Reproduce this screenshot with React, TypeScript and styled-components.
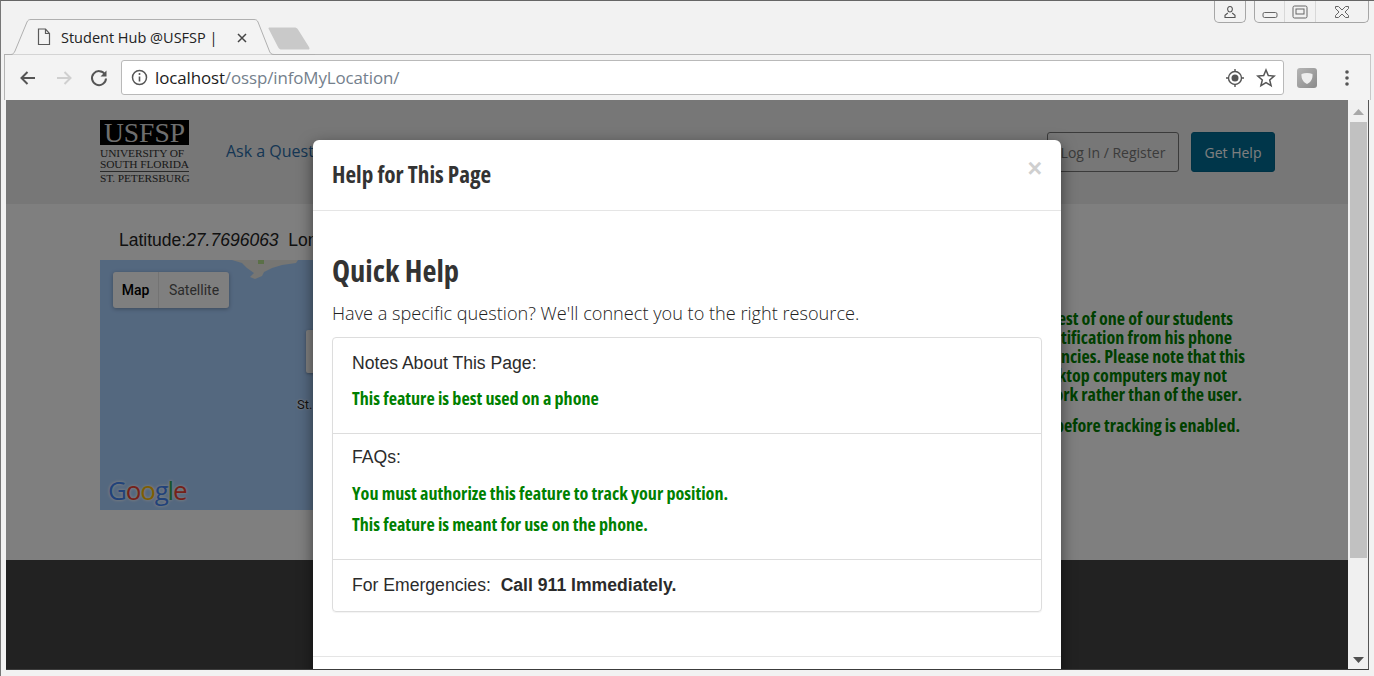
import React from "react";
import styled, { createGlobalStyle } from "styled-components";

const Global = createGlobalStyle`
  html, body { margin: 0; padding: 0; width: 1374px; height: 676px; overflow: hidden; background: #f2f2f2; }
  * { box-sizing: border-box; }
`;

const cond = `"Open Sans", "Liberation Sans Narrow", sans-serif`;

const Frame = styled.div`
  width: 1374px; height: 676px; display: flex; flex-direction: column;
  background: #f2f2f2; border-top: 1px solid #666; border-left: 1px solid #777;
  font-family: "Open Sans", sans-serif; position: relative;
`;
const TabStrip = styled.div`
  height: 53px; flex: none; display: flex; align-items: flex-start; padding-left: 36px; position: relative;
`;
const TabShape = styled.svg`
  position: absolute; left: 3px; top: 17px; width: 311px; height: 38px;
`;
const TabIcon = styled.svg`
  width: 14px; height: 18px; margin-top: 27px; position: relative; flex: none;
`;
const TabTitle = styled.div`
  font-size: 14.5px; color: #222; margin: 27px 0 0 10px; width: 176px; white-space: nowrap; position: relative; line-height: 20px;
`;
const TabClose = styled.svg`
  width: 10px; height: 10px; margin: 32px 0 0 0; position: relative; flex: none;
`;
const WindowControls = styled.div`
  position: absolute; right: 5px; top: 0; display: flex; gap: 8px;
`;
const WinGroup = styled.div`
  height: 22px; display: flex; border: 1px solid #a6a6a6; border-top: none; border-radius: 0 0 5px 5px; background: #f2f2f2;
`;
const WinButton = styled.div<{ $w: number; $divide?: boolean }>`
  width: ${(p) => p.$w}px; display: flex; align-items: center; justify-content: center;
  border-right: ${(p) => (p.$divide ? "1px solid #d8d8d8" : "none")};
`;
const Toolbar = styled.div`
  height: 46px; flex: none; margin: 0 3px 0 3px; display: flex; align-items: center; border: 1px solid #b4b4b4; border-bottom: none; border-right-color: #c8c8c8;
  background: #f3f3f3; padding: 0 0 0 13px;
`;
const NavIcon = styled.svg<{ $mr: number }>`
  width: 20px; height: 20px; margin-right: ${(p) => p.$mr}px; flex: none;
`;
const Omnibox = styled.div`
  width: 1163px; height: 35px; flex: none; background: #fff; border: 1px solid #b9b9b9; border-radius: 3px;
  display: flex; align-items: center; padding: 0 7px 0 9px;
`;
const Url = styled.div`
  font-size: 16.9px; color: #74808c; margin-left: 7px; flex: 1; white-space: nowrap; letter-spacing: -0.1px;
`;
const UrlHost = styled.span` color: #1c1c1c; `;
const ExtBadge = styled.div`
  width: 20px; height: 20px; margin-left: 13px; border-radius: 3px; background: linear-gradient(135deg, #b5b5b5, #8a8a8a);
  display: flex; align-items: center; justify-content: center; flex: none;
`;
const MenuDots = styled.svg`
  width: 6px; height: 20px; margin-left: 27px; flex: none;
`;
const Viewport = styled.div`
  flex: none; height: 570px; margin: 0 5px 0 5px; display: flex; position: relative; overflow: hidden;
  border-bottom: 1px solid #3c3c3c; border-right: 1px solid #555;
`;
const Page = styled.div`
  width: 1342px; flex: none; display: flex; flex-direction: column; background: #fff; position: relative;
`;
const Scrollbar = styled.div`
  flex: 1; background: #f0f0f0; display: flex; flex-direction: column; align-items: stretch; padding: 0 1px 0 2px;
`;
const ScrollArrow = styled.svg`
  width: 11px; height: 6px; margin: 9px auto 7px;
  flex: none;
`;
const ScrollThumb = styled.div`
  height: 436px; background: #c1c1c1; flex: none;
`;
const ScrollEnd = styled.div`
  flex: 1; display: flex; align-items: flex-end; justify-content: center; padding-bottom: 6px;
`;
const SiteHeader = styled.div`
  height: 104px; flex: none; background: #eeeeee; padding: 20px 73px 0 94px; display: flex; align-items: flex-start;
`;
const Logo = styled.div`
  width: 89px; flex: none; display: flex; flex-direction: column; font-family: "Liberation Serif", serif; color: #333; line-height: 11px; font-size: 11.4px; white-space: nowrap;
`;
const LogoBox = styled.div`
  background: #000; color: #ddd; height: 25px; font-size: 27.5px; line-height: 25px; text-align: center; margin-bottom: 3px; letter-spacing: 0; overflow: hidden;
`;
const LogoLine = styled.div<{ $rule?: boolean }>`
  letter-spacing: -0.1px;
  ${(p) => (p.$rule ? "border-top: 1px solid #555; margin-top: 1px; padding-top: 1px;" : "")}
`;
const NavLink = styled.a`
  margin: 20px 0 0 37px; font-size: 16px; color: #2a6ca8; white-space: nowrap; line-height: 22px;
`;
const Spacer = styled.div` flex: 1; `;
const OutlineButton = styled.div`
  width: 132px; height: 40px; margin-top: 12px; border: 1px solid #777; border-radius: 3px; background: #eeeeee;
  font-size: 14px; color: #777; display: flex; align-items: center; justify-content: center;
`;
const PrimaryButton = styled.div`
  width: 84px; height: 40px; margin: 12px 0 0 12px; border-radius: 3px; background: #006d94; border: 1px solid #00648a;
  font-size: 14px; color: #fff; display: flex; align-items: center; justify-content: center;
`;
const Main = styled.div`
  height: 356px; flex: none; background: #fff; display: flex; padding: 25px 0 0 94px;
`;
const MapColumn = styled.div`
  width: 600px; flex: none; display: flex; flex-direction: column;
`;
const Coords = styled.div`
  font-family: "Liberation Sans", sans-serif; font-size: 17.5px; color: #222; padding-left: 19px; height: 31px; line-height: 22px; white-space: pre;
`;
const MapBox = styled.div`
  width: 600px; height: 250px; background: #a8d0ff; position: relative; overflow: hidden;
`;
const MapLand = styled.svg`
  position: absolute; left: 130px; top: 0; width: 80px; height: 24px;
`;
const MapToggle = styled.div`
  position: absolute; left: 13px; top: 12px; height: 36px; width: 116px; display: flex; background: #fff; border-radius: 3px;
  box-shadow: 0 1px 4px rgba(0,0,0,.3); font-family: Roboto, sans-serif; font-size: 14px;
`;
const MapTab = styled.div<{ $on?: boolean }>`
  flex: none; width: ${(p) => (p.$on ? 46 : 70)}px; display: flex; align-items: center; justify-content: center;
  color: ${(p) => (p.$on ? "#000" : "#565656")}; font-weight: ${(p) => (p.$on ? 500 : 400)};
  border-right: ${(p) => (p.$on ? "1px solid #e6e6e6" : "none")};
`;
const MapInfo = styled.div`
  position: absolute; left: 206px; top: 70px; width: 60px; height: 43px; background: #fff; border-radius: 2px; box-shadow: 0 1px 3px rgba(0,0,0,.3);
`;
const MapLabel = styled.div`
  position: absolute; left: 197px; top: 137px; font-family: Roboto, sans-serif; font-size: 13px; color: #222; text-shadow: 0 0 2px #fff, 0 0 2px #fff;
`;
const GoogleMark = styled.div`
  position: absolute; left: 8px; bottom: 5px; font-family: "Open Sans", sans-serif; font-size: 26px; font-weight: 500; letter-spacing: -1.2px; line-height: 30px;
  text-shadow: 0 0 3px rgba(255,255,255,.9), 0 0 3px rgba(255,255,255,.9);
`;
const GLetter = styled.span<{ $c: string }>` color: ${(p) => p.$c}; `;
const Notice = styled.div`
  position: absolute; right: 103px; top: 209px; width: 500px; display: flex; flex-direction: column; align-items: flex-end;
  font-family: ${cond}; font-stretch: 75%; font-weight: 700; font-size: 18px; color: #008000; line-height: 19px; white-space: nowrap;
`;
const NoticeLine = styled.div<{ $trim: number; $gap?: number }>`
  padding-right: ${(p) => p.$trim}px; margin-top: ${(p) => p.$gap ?? 0}px;
`;
const SiteFooter = styled.div`
  flex: 1; background: #444;
`;
const Backdrop = styled.div`
  position: absolute; left: 0; top: 0; right: 0; bottom: 0; background: rgba(0,0,0,.5);
`;
const Modal = styled.div`
  position: absolute; left: 307px; top: 40px; width: 748px; height: 560px; background: #fff; border-radius: 6px 6px 0 0;
  box-shadow: 0 5px 15px rgba(0,0,0,.5); display: flex; flex-direction: column;
`;
const ModalHeader = styled.div`
  height: 71px; flex: none; border-bottom: 1px solid #e5e5e5; padding: 0 19px; display: flex; justify-content: space-between; position: relative;
`;
const ModalTitle = styled.h4`
  margin: 17px 0 0; font-family: ${cond}; font-stretch: 75%; font-weight: 700; font-size: 23.2px; line-height: 34px; color: #333;
`;
const CloseX = styled.div`
  position: absolute; right: 19px; top: 13px; font-family: "Liberation Sans", sans-serif; font-weight: 700; font-size: 25px; color: #cfcfcf; line-height: 30px;
`;
const ModalBody = styled.div`
  padding: 0 19px; flex: none;
`;
const QuickTitle = styled.h2`
  margin: 38px 0 0; font-family: ${cond}; font-stretch: 75%; font-weight: 700; font-size: 30.500px; line-height: 42px; color: #333;
`;
const Lead = styled.p`
  margin: 10px 0 0; font-size: 18.150px; font-weight: 300; line-height: 24px; color: #222; height: 36px; white-space: nowrap;
`;
const Panel = styled.div`
  width: 710px; border: 1px solid #ddd; border-radius: 4px; box-shadow: 0 1px 1px rgba(0,0,0,.05);
`;
const PanelRow = styled.div<{ $h: number; $pad: number }>`
  height: ${(p) => p.$h}px; padding: ${(p) => p.$pad}px 19px 0; border-top: 1px solid #ddd;
  &:first-child { border-top: none; }
`;
const RowLabel = styled.div`
  font-family: "Liberation Sans", sans-serif; font-size: 17.600px; color: #2b2b2b; line-height: 22px; white-space: pre;
`;
const RowStrong = styled.strong` font-weight: 700; `;
const GreenNote = styled.p<{ $gap: number }>`
  margin: ${(p) => p.$gap}px 0 0; font-family: ${cond}; font-stretch: 75%; font-weight: 700; font-size: 18.100px; line-height: 24px; color: #008000;
`;
const ModalFooterRule = styled.div`
  margin-top: 44px; border-top: 1px solid #e5e5e5;
`;

const notice = [
  { t: "request of one of our students", trim: 12, gap: 0 },
  { t: "notification from his phone", trim: 13, gap: 0 },
  { t: "emergencies. Please note that this", trim: 0, gap: 0 },
  { t: "desktop computers may not", trim: 18, gap: 0 },
  { t: "network rather than of the user.", trim: 3, gap: 0 },
  { t: "before tracking is enabled.", trim: 5, gap: 12 },
];

export default function App() {
  return (
    <>
      <Global />
      <Frame>
        <TabStrip>
          <TabShape viewBox="0 0 311 38">
            <path d="M0 36.500H7C9 36.500 10 35 11 33L23 4C24 2 25 1.500 27 1.500H250C252 1.500 253 2 254 4L265 32C266 35 267 36.500 270 36.500H311" fill="#f3f3f3" stroke="#b0b0b0" strokeWidth="1" />
            <path d="M265 11.500C264 10 264.500 9.500 266 9.500H290C292 9.500 293 10 294 11.500L305 29C306 31 305.500 31.500 304 31.500H278C276 31.500 275 31 274 29Z" fill="#c9c9c9" />
          </TabShape>
          <TabIcon viewBox="0 0 14 18">
            <path d="M1.500 1H8.500L12.500 5.500V16.500H1.500ZM8.500 1V5.500H12.500" fill="none" stroke="#5a5a5a" strokeWidth="1.200" />
          </TabIcon>
          <TabTitle>Student Hub @USFSP |</TabTitle>
          <TabClose viewBox="0 0 10 10">
            <path d="M1 1L9 9M9 1L1 9" stroke="#444" strokeWidth="1.500" />
          </TabClose>
          <WindowControls>
            <WinGroup>
              <WinButton $w={30}>
                <svg width="14" height="14" viewBox="0 0 14 14"><path d="M7 1.500C8.800 1.500 9.600 3 9.300 4.800C9.100 6 8.500 7 7 7C5.500 7 4.900 6 4.700 4.800C4.400 3 5.200 1.500 7 1.500ZM4.800 8L2 10.200V12.500H12V10.200L9.200 8" fill="none" stroke="#555" strokeWidth="1.100" /></svg>
              </WinButton>
            </WinGroup>
            <WinGroup>
              <WinButton $w={30} $divide>
                <svg width="16" height="8" viewBox="0 0 16 8" style={{ marginTop: 7 }}><rect x="1" y="1.500" width="14" height="5" rx="1.500" fill="none" stroke="#666" /></svg>
              </WinButton>
              <WinButton $w={31} $divide>
                <svg width="16" height="14" viewBox="0 0 16 14"><rect x="1" y="1" width="14" height="12" rx="1.500" fill="none" stroke="#666" /><rect x="4" y="4" width="8" height="5" fill="none" stroke="#666" /></svg>
              </WinButton>
              <WinButton $w={52}>
                <svg width="16" height="14" viewBox="0 0 16 14"><path d="M1.500 1.500H4.500L8 5L11.500 1.500H14.500V3.500L11 7L14.500 10.500V12.500H11.500L8 9L4.500 12.500H1.500V10.500L5 7L1.500 3.500Z" fill="none" stroke="#666" /></svg>
              </WinButton>
            </WinGroup>
          </WindowControls>
        </TabStrip>
        <Toolbar>
          <NavIcon $mr={16} viewBox="0 0 20 20"><path d="M17 10H4M9.500 4L3.500 10L9.500 16" fill="none" stroke="#555" strokeWidth="2" /></NavIcon>
          <NavIcon $mr={15} viewBox="0 0 20 20"><path d="M3 10H16M10.500 4L16.500 10L10.500 16" fill="none" stroke="#cfcfcf" strokeWidth="2" /></NavIcon>
          <NavIcon $mr={12} viewBox="0 0 20 20"><path d="M16 6.500A7 7 0 1 0 17 10.500" fill="none" stroke="#555" strokeWidth="2" /><path d="M17.500 2.500V8.500H11.500Z" fill="#555" /></NavIcon>
          <Omnibox>
            <svg width="17" height="17" viewBox="0 0 17 17"><circle cx="8.500" cy="8.500" r="7" fill="none" stroke="#555" strokeWidth="1.500" /><path d="M8.500 7.500V12.500" stroke="#555" strokeWidth="1.600" /><circle cx="8.500" cy="5" r="1" fill="#555" /></svg>
            <Url><UrlHost>localhost</UrlHost>/ossp/infoMyLocation/</Url>
            <svg width="20" height="20" viewBox="0 0 20 20"><circle cx="10" cy="10" r="6.500" fill="none" stroke="#555" strokeWidth="1.400" /><circle cx="10" cy="10" r="3.500" fill="#555" /><path d="M10 1V3.500M10 16.500V19M1 10H3.500M16.500 10H19" stroke="#555" strokeWidth="1.400" /></svg>
            <svg width="20" height="20" viewBox="0 0 20 20" style={{ marginLeft: 11 }}><path d="M10 2L12.300 7.500L18.200 8L13.700 11.900L15.100 17.700L10 14.600L4.900 17.700L6.300 11.900L1.800 8L7.700 7.500Z" fill="none" stroke="#555" strokeWidth="1.500" /></svg>
          </Omnibox>
          <ExtBadge>
            <svg width="14" height="14" viewBox="0 0 14 14"><path d="M1.500 3C5 1.500 9 1.500 12.500 3C13 8 10.500 11.500 7 13C3.500 11.500 1 8 1.500 3Z" fill="#eee" /></svg>
          </ExtBadge>
          <MenuDots viewBox="0 0 6 20"><circle cx="3" cy="4" r="1.800" fill="#555" /><circle cx="3" cy="10" r="1.800" fill="#555" /><circle cx="3" cy="16" r="1.800" fill="#555" /></MenuDots>
        </Toolbar>
        <Viewport>
          <Page>
            <SiteHeader>
              <Logo>
                <LogoBox>USFSP</LogoBox>
                <LogoLine>UNIVERSITY OF</LogoLine>
                <LogoLine>SOUTH FLORIDA</LogoLine>
                <LogoLine $rule>ST. PETERSBURG</LogoLine>
              </Logo>
              <NavLink>Ask a Question</NavLink>
              <Spacer />
              <OutlineButton>Log In / Register</OutlineButton>
              <PrimaryButton>Get Help</PrimaryButton>
            </SiteHeader>
            <Main>
              <MapColumn>
                <Coords>Latitude:<i>27.7696063</i>{"  "}Longitude</Coords>
                <MapBox>
                  <MapLand viewBox="0 0 80 24">
                    <path d="M2 0H68L66 3L52 5L42 8L34 12L32 16L25 19L20 17L24 13L17 8L12 3Z" fill="#eeede6" />
                    <rect x="28" y="0" width="6" height="4" fill="#b7e08f" />
                  </MapLand>
                  <MapToggle>
                    <MapTab $on>Map</MapTab>
                    <MapTab>Satellite</MapTab>
                  </MapToggle>
                  <MapInfo />
                  <MapLabel>St. Petersburg</MapLabel>
                  <GoogleMark>
                    <GLetter $c="#4285f4">G</GLetter><GLetter $c="#ea4335">o</GLetter><GLetter $c="#fbbc05">o</GLetter><GLetter $c="#4285f4">g</GLetter><GLetter $c="#34a853">l</GLetter><GLetter $c="#ea4335">e</GLetter>
                  </GoogleMark>
                </MapBox>
              </MapColumn>
              <Notice>
                {notice.map((n) => (
                  <NoticeLine key={n.t} $trim={n.trim} $gap={n.gap}>{n.t}</NoticeLine>
                ))}
              </Notice>
            </Main>
            <SiteFooter />
            <Backdrop />
            <Modal>
              <ModalHeader>
                <ModalTitle>Help for This Page</ModalTitle>
                <CloseX>×</CloseX>
              </ModalHeader>
              <ModalBody>
                <QuickTitle>Quick Help</QuickTitle>
                <Lead>Have a specific question? We'll connect you to the right resource.</Lead>
                <Panel>
                  <PanelRow $h={95} $pad={14}>
                    <RowLabel>Notes About This Page:</RowLabel>
                    <GreenNote $gap={12}>This feature is best used on a phone</GreenNote>
                  </PanelRow>
                  <PanelRow $h={126} $pad={12}>
                    <RowLabel>FAQs:</RowLabel>
                    <GreenNote $gap={13}>You must authorize this feature to track your position.</GreenNote>
                    <GreenNote $gap={7}>This feature is meant for use on the phone.</GreenNote>
                  </PanelRow>
                  <PanelRow $h={52} $pad={14}>
                    <RowLabel>For Emergencies:  <RowStrong>Call 911 Immediately.</RowStrong></RowLabel>
                  </PanelRow>
                </Panel>
              </ModalBody>
              <ModalFooterRule />
            </Modal>
          </Page>
          <Scrollbar>
            <ScrollArrow viewBox="0 0 11 6"><path d="M5.500 0L11 6H0Z" fill="#a8a8a8" /></ScrollArrow>
            <ScrollThumb />
            <ScrollEnd>
              <svg width="11" height="6" viewBox="0 0 11 6"><path d="M0 0H11L5.500 6Z" fill="#505050" /></svg>
            </ScrollEnd>
          </Scrollbar>
        </Viewport>
      </Frame>
    </>
  );
}
